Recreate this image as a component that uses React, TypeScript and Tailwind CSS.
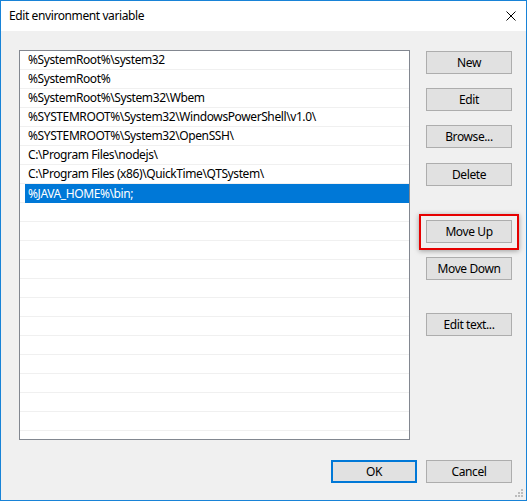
import React from "react";

const rows = [
  "%SystemRoot%\\system32",
  "%SystemRoot%",
  "%SystemRoot%\\System32\\Wbem",
  "%SYSTEMROOT%\\System32\\WindowsPowerShell\\v1.0\\",
  "%SYSTEMROOT%\\System32\\OpenSSH\\",
  "C:\\Program Files\\nodejs\\",
  "C:\\Program Files (x86)\\QuickTime\\QTSystem\\",
  "%JAVA_HOME%\\bin;",
];

function Btn({ label, className = "" }: { label: string; className?: string }) {
  return (
    <div
      className={
        "w-[86px] h-[23px] border border-[#adadad] bg-[#e1e1e1] flex items-center justify-center text-black " +
        className
      }
    >
      {label}
    </div>
  );
}

export default function App() {
  const all = [...rows, ...Array.from({ length: 13 }, () => "")];
  return (
    <div className="w-[527px] h-[501px] border border-[#1883d7] bg-[#f0f0f0] flex flex-col font-['Noto_Sans',sans-serif] text-[12px] tracking-[-0.4px] text-black leading-none overflow-hidden">
      <div className="h-[30px] shrink-0 bg-white flex items-center justify-between pl-[8px] pr-[10px]">
        <span>Edit environment variable</span>
        <svg width="10" height="10" viewBox="0 0 10 10">
          <path d="M0.5 0.5 L9.5 9.5 M9.5 0.5 L0.5 9.5" stroke="#000" strokeWidth="1" />
        </svg>
      </div>
      <div className="flex pt-[19px] pl-[18px]">
        <div className="w-[391px] h-[390px] border border-[#828790] bg-white overflow-hidden">
          {all.map((r, i) => {
            const sel = i === 7;
            return (
              <div key={i} className="h-[19px] border-b border-[#f0f0f0] flex">
                <div
                  className={
                    "flex-1 flex items-center ml-[5px] pl-[3px] " +
                    (sel ? "bg-[#0078d7] text-white h-[19px]" : "")
                  }
                >
                  {r}
                </div>
              </div>
            );
          })}
        </div>
        <div className="ml-[16px] flex flex-col">
          <Btn label="New" className="mt-[1px]" />
          <Btn label="Edit" className="mt-[14px]" />
          <Btn label="Browse..." className="mt-[14px]" />
          <Btn label="Delete" className="mt-[15px]" />
          <div className="relative mt-[34px]">
            <Btn label="Move Up" />
            <div className="absolute -left-[7px] -top-[6px] w-[100px] h-[36px] border-2 border-[#e60000] shadow-[0_1px_5px_rgba(0,0,0,0.35)]" />
          </div>
          <Btn label="Move Down" className="mt-[14px]" />
          <Btn label="Edit text..." className="mt-[33px]" />
        </div>
      </div>
      <div className="flex justify-end pr-[14px] pt-[20px] gap-[9px]">
        <div className="w-[86px] h-[23px] border-2 border-[#0078d7] bg-[#e1e1e1] flex items-center justify-center">
          OK
        </div>
        <Btn label="Cancel" />
      </div>
      <div className="flex-1 flex justify-end items-end pr-[2px] pb-[2px]">
        <svg width="10" height="9" viewBox="0 0 10 9">
          <rect x="7" y="0" width="2" height="2" fill="#bcbcbc" />
          <rect x="4" y="3" width="2" height="2" fill="#bcbcbc" />
          <rect x="7" y="3" width="2" height="2" fill="#bcbcbc" />
          <rect x="1" y="6" width="2" height="2" fill="#bcbcbc" />
          <rect x="4" y="6" width="2" height="2" fill="#bcbcbc" />
          <rect x="7" y="6" width="2" height="2" fill="#bcbcbc" />
        </svg>
      </div>
    </div>
  );
}
